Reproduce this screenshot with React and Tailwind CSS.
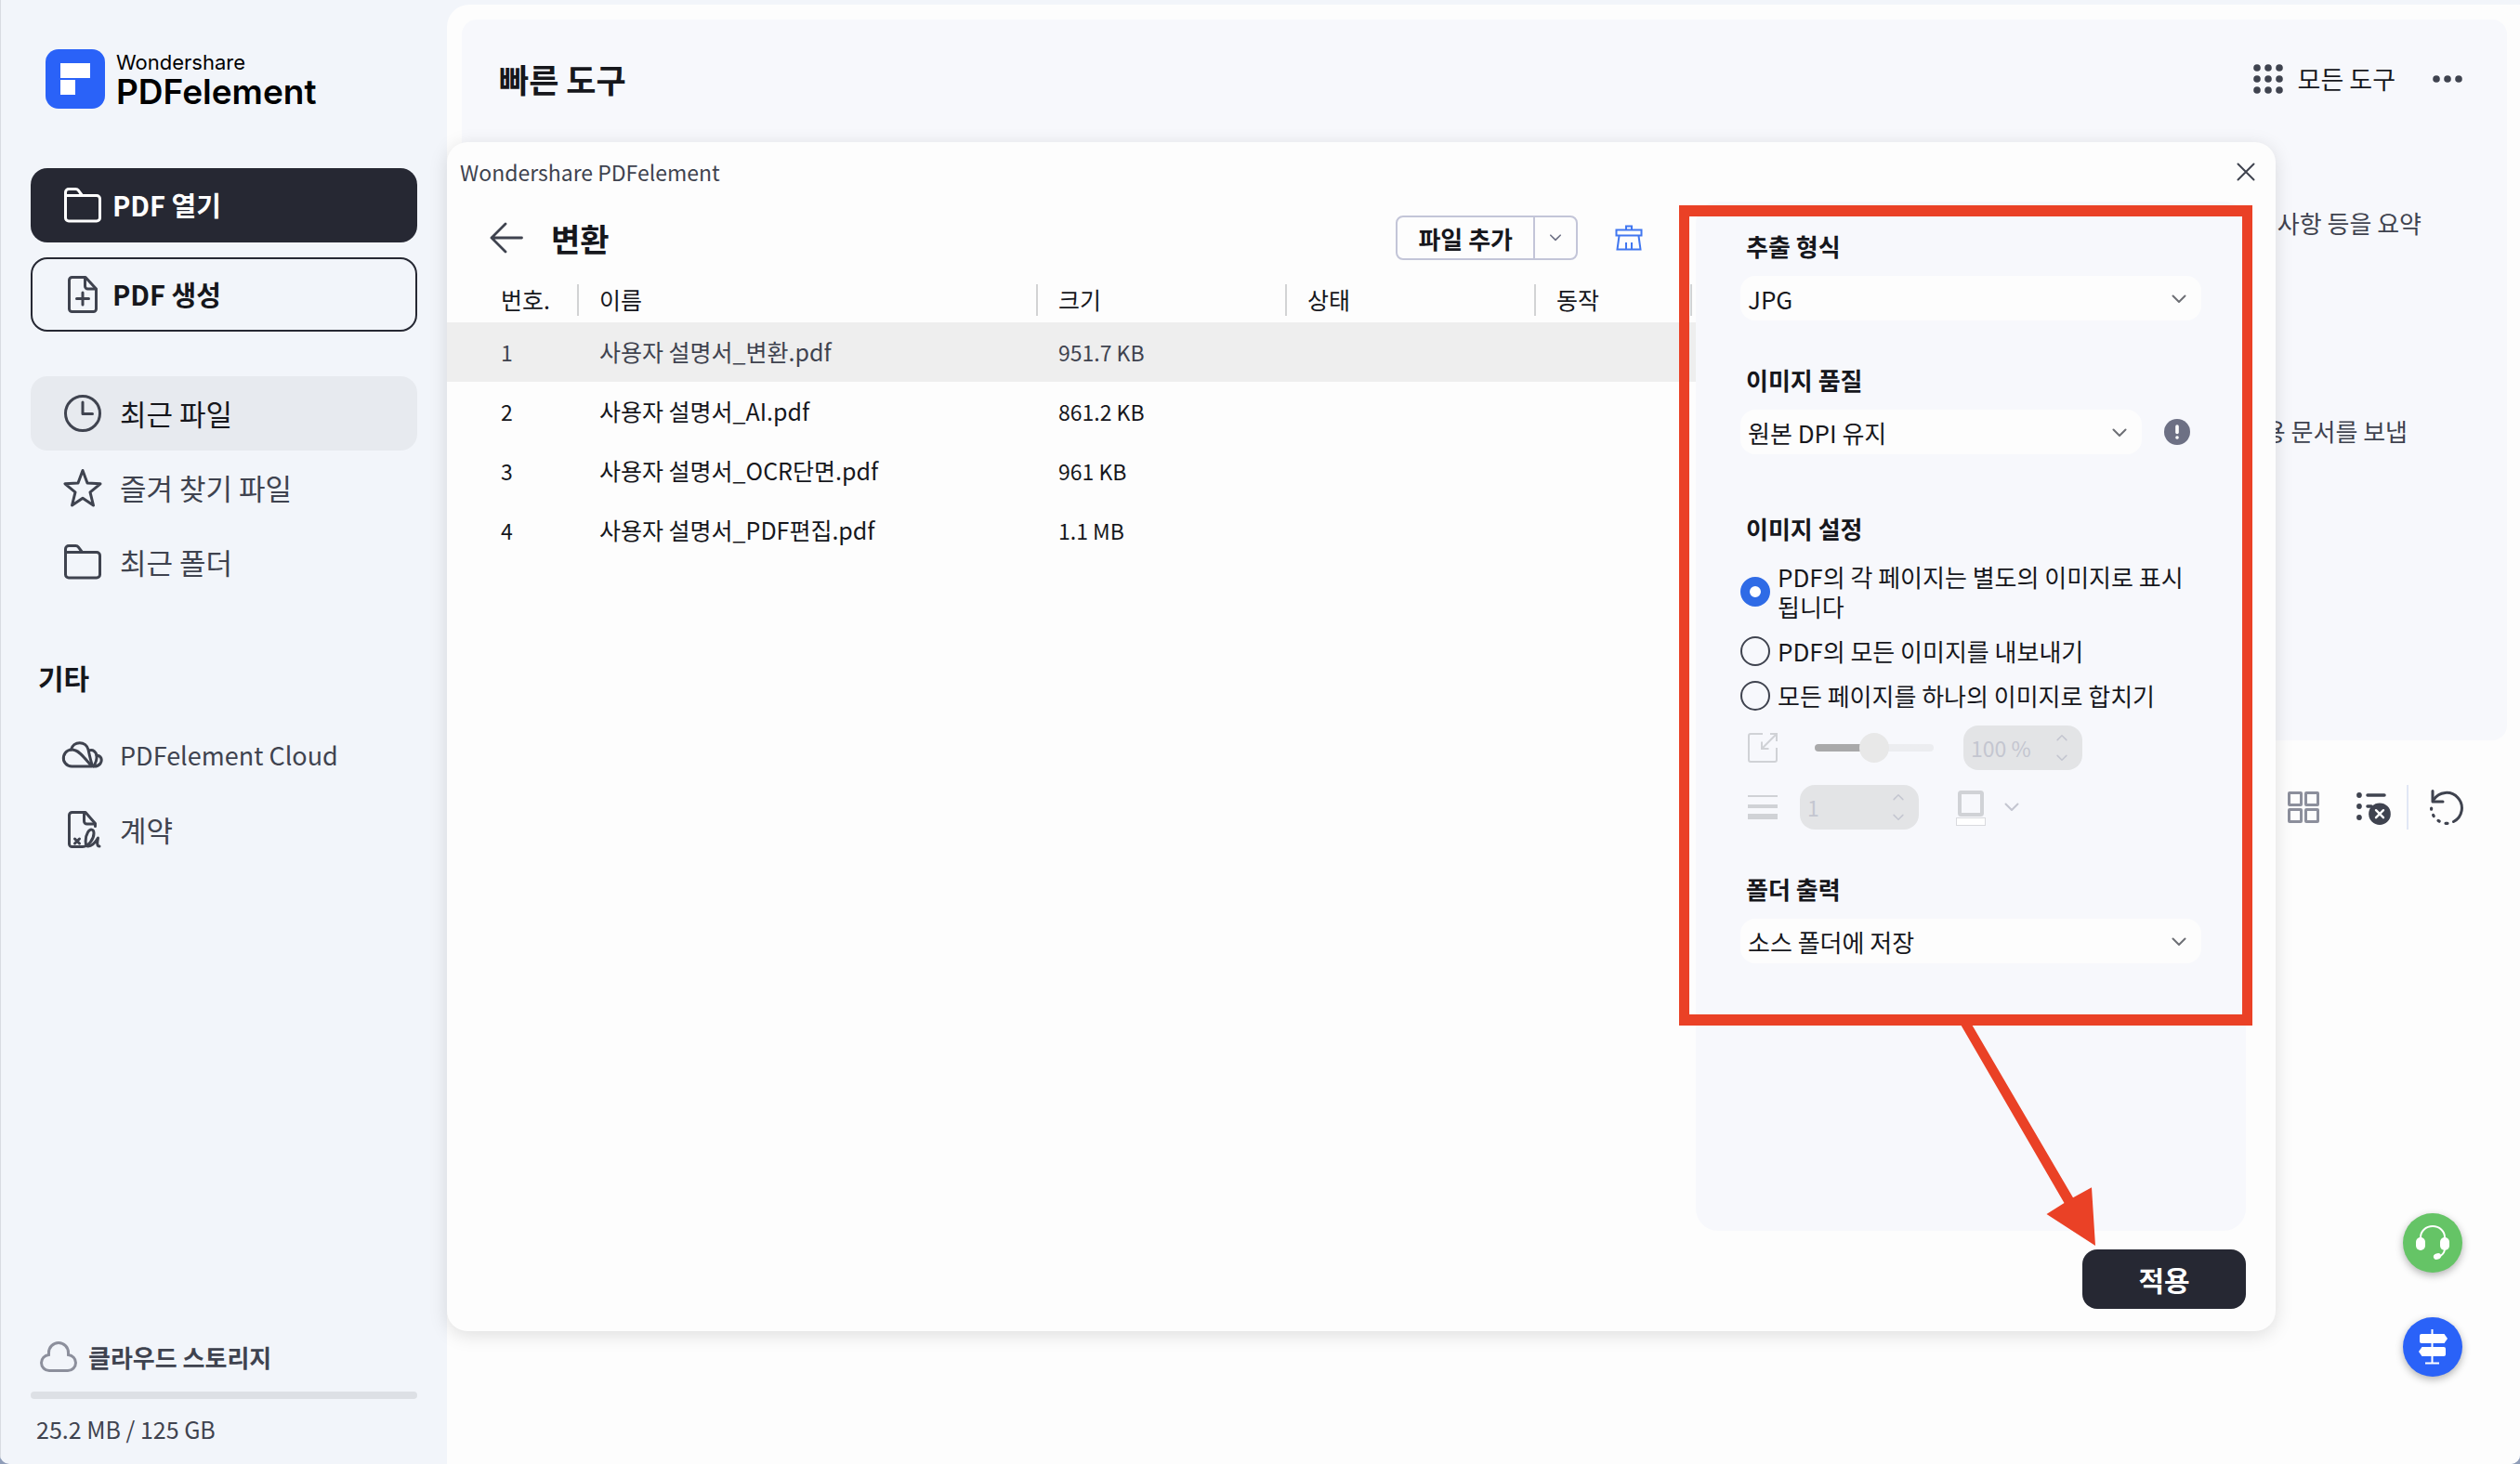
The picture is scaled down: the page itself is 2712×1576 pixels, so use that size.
import { useState } from 'react';

const files = [
  { id: 1, name: '사용자 설명서_변환.pdf', size: '951.7 KB' },
  { id: 2, name: '사용자 설명서_AI.pdf', size: '861.2 KB' },
  { id: 3, name: '사용자 설명서_OCR단면.pdf', size: '961 KB' },
  { id: 4, name: '사용자 설명서_PDF편집.pdf', size: '1.1 MB' },
];

const imageModes = [
  { id: 'separate', label: 'PDF의 각 페이지는 별도의 이미지로 표시됩니다' },
  { id: 'export', label: 'PDF의 모든 이미지를 내보내기' },
  { id: 'merge', label: '모든 페이지를 하나의 이미지로 합치기' },
];

// All sidebar icons share a 48px box
function Icon({ children, className = 'size-12' }) {
  return (
    <svg
      viewBox="0 0 48 48"
      className={`shrink-0 ${className}`}
      fill="none"
      stroke="currentColor"
      strokeWidth="3"
      strokeLinecap="round"
      strokeLinejoin="round"
      aria-hidden="true"
    >
      {children}
    </svg>
  );
}

function FolderIcon() {
  return (
    <Icon>
      <path d="M5.5 13.5V10A3.5 3.5 0 0 1 9 6.500h7.500a3.500 3.500 0 0 1 2.800 1.400L23.500 13.500" />
      <path d="M5.500 13.500H39a3.500 3.500 0 0 1 3.500 3.500v20.500a3.500 3.500 0 0 1-3.500 3.500H9a3.500 3.500 0 0 1-3.500-3.500z" />
    </Icon>
  );
}

function NewFileIcon() {
  return (
    <Icon>
      <path d="M27 5.500H12.500a3 3 0 0 0-3 3v31a3 3 0 0 0 3 3h23a3 3 0 0 0 3-3V18z" />
      <path d="M26.500 6v9a3 3 0 0 0 3 3H38" />
      <path d="M24 22v13M17.500 28.500h13" />
    </Icon>
  );
}

function ClockIcon() {
  return (
    <Icon>
      <circle cx="24" cy="24" r="18.500" />
      <path d="M24 12v12.500h10.500" />
    </Icon>
  );
}

function StarIcon() {
  return (
    <Icon>
      <path d="M24 5.500l5 13.500 14 .8-11 9L35.500 43 24 35.200 12.500 43l3.500-14.200-11-9 14-.8z" />
    </Icon>
  );
}

function CloudsIcon() {
  return (
    <Icon>
      <path d="M34 36H12.500a9 9 0 1 1 3.500-17.200c5 1.500 9 7 18 17.200z" />
      <path d="M11.500 18a9.500 9.500 0 0 1 18.500 0c1.500 7 3 13 4.500 17.500" />
      <path d="M30.500 19c5-1.500 8 1.500 8.500 5.500.5 4-1 8-3.500 11.500" />
      <path d="M39 24c5 .5 6.500 5 4 9-1.500 2-3.500 3-7 3" />
    </Icon>
  );
}

function ContractIcon() {
  return (
    <Icon>
      <path d="M37.500 20.500V17.500L27 5.500H12.500a3 3 0 0 0-3 3v31a3 3 0 0 0 3 3H24c6 0 12-8 12-14.500 0-5-4-5-6.500-1-3 5-3.500 15 .5 15 4.500 0 7.500-4 10.500-9-1 5-1.500 9 1.500 9" />
      <path d="M25.500 6v9a3 3 0 0 0 3 3H37" />
      <path d="M15.500 34l5 5m0-5l-5 5" />
    </Icon>
  );
}

function Chevron({ className = '' }) {
  return (
    <svg viewBox="0 0 16 10" className={className} fill="none" stroke="currentColor" strokeWidth="2" strokeLinecap="round" strokeLinejoin="round" aria-hidden="true">
      <path d="M1.500 1.500L8 8l6.500-6.500" />
    </svg>
  );
}

function NavItem({ icon, label, active, labelClass = 'text-[31px]' }) {
  return (
    <a
      href="#"
      className={`flex h-20 items-center gap-4 rounded-[18px] px-8 ${
        active ? 'bg-[#e7eaef] text-[#16171c]' : 'text-[#3f434f]'
      }`}
    >
      <span className="flex text-[#3f434f]">{icon}</span>
      <span className={labelClass}>{label}</span>
    </a>
  );
}

function Sidebar() {
  return (
    <aside className="flex w-[481px] shrink-0 flex-col border-l border-[#d9dce2] pt-[53px] pr-8 pb-5 pl-8">
      <div className="flex h-16 items-center gap-3 pl-4">
        <svg viewBox="0 0 64 64" className="size-16 shrink-0" aria-hidden="true">
          <rect width="64" height="64" rx="14" fill="#2a62f8" />
          <path d="M16 15h32v16H16zM16 33h16v16H16z" fill="#fff" />
        </svg>
        <div className="font-['Inter',sans-serif] text-black">
          <div className="text-[22px] leading-7">Wondershare</div>
          <div className="text-[37px] leading-9 font-semibold">PDFelement</div>
        </div>
      </div>

      <button className="mt-16 flex h-20 items-center gap-2 rounded-[18px] bg-[#262833] px-8 text-[29px] font-bold text-white">
        <FolderIcon />
        PDF 열기
      </button>
      <button className="mt-4 flex h-20 items-center gap-2 rounded-[18px] border-2 border-[#262833] px-[30px] text-[29px] font-bold">
        <span className="flex text-[#3f434f]"><NewFileIcon /></span>
        PDF 생성
      </button>

      <nav className="mt-12">
        <NavItem icon={<ClockIcon />} label="최근 파일" active />
        <NavItem icon={<StarIcon />} label="즐겨 찾기 파일" />
        <NavItem icon={<FolderIcon />} label="최근 폴더" />
        <h2 className="mt-16 mb-6 pl-2 text-[30px] leading-10 font-bold">기타</h2>
        <NavItem icon={<CloudsIcon />} label="PDFelement Cloud" labelClass="text-[27px]" />
        <NavItem icon={<ContractIcon />} label="계약" />
      </nav>

      <div className="mt-auto">
        <div className="flex h-9 items-center gap-3 pl-2.5 text-[26px] font-bold text-[#3f434f]">
          <svg viewBox="0 0 40 34" className="h-[34px] w-10 shrink-0" fill="none" stroke="#8c8f9c" strokeWidth="3" aria-hidden="true">
            <path d="M9.500 15.500V13a10.500 10.500 0 0 1 21 0v2.500c4.500.5 8 4 8 8.500 0 5-4 8.500-8.500 8.500H10c-4.500 0-8.500-3.500-8.500-8.500 0-4.500 3.500-8 8-8.500z" />
          </svg>
          클라우드 스토리지
        </div>
        <div className="mt-5 h-2 rounded-full bg-[#dde0e5]" />
        <p className="mt-3.5 pl-1.5 text-[25px] leading-9 text-[#3f434f]">25.2 MB / 125 GB</p>
      </div>
    </aside>
  );
}

function QuickTools() {
  return (
    <section className="ml-4 mr-3.5 flex h-[776px] flex-col rounded-2xl bg-[#f7f8fc]">
      <div className="flex items-center justify-between pt-[38px] pr-12 pl-10">
        <h1 className="text-[35px] leading-[52px] font-bold">빠른 도구</h1>
        <div className="flex items-center gap-10">
          <button className="flex items-center gap-4 text-[27px]">
            <svg viewBox="0 0 32 32" className="size-8" fill="#3f434f" aria-hidden="true">
              {[4, 16, 28].map((y) =>
                [4, 16, 28].map((x) => <circle key={`${x}-${y}`} cx={x} cy={y} r="3.800" />)
              )}
            </svg>
            모든 도구
          </button>
          <button aria-label="더 보기">
            <svg viewBox="0 0 32 8" className="h-2 w-8" fill="#3f434f">
              <circle cx="4" cy="4" r="3.800" />
              <circle cx="16" cy="4" r="3.800" />
              <circle cx="28" cy="4" r="3.800" />
            </svg>
          </button>
        </div>
      </div>
      <p className="mt-[109px] pr-[92px] text-right text-[26px] leading-10 text-[#3f434f]">사항 등을 요약</p>
      <p className="mt-[184px] pr-[107px] text-right text-[26px] leading-10 text-[#3f434f]">용 문서를 보냅</p>
    </section>
  );
}

function ListToolbar() {
  return (
    <div className="mt-12 flex h-12 items-center justify-end pr-[60px]">
      <button aria-label="바둑판 보기">
        <svg viewBox="0 0 34 34" className="size-[34px]" fill="none" stroke="#8c8f9c" strokeWidth="3" aria-hidden="true">
          <rect x="1.500" y="1.500" width="13" height="13" rx=".5" />
          <rect x="19.500" y="1.500" width="13" height="13" rx=".5" />
          <rect x="1.500" y="19.500" width="13" height="13" rx=".5" />
          <rect x="19.500" y="19.500" width="13" height="13" rx=".5" />
        </svg>
      </button>
      <button className="ml-10" aria-label="목록 지우기">
        <svg viewBox="0 0 38 38" className="size-[38px]" fill="none" stroke="#3f434f" strokeWidth="3.500" strokeLinecap="round" aria-hidden="true">
          <path d="M12 6h18M12 18h4" />
          <g fill="#3f434f" stroke="none">
            <circle cx="3" cy="6" r="2.900" />
            <circle cx="3" cy="18" r="2.900" />
            <circle cx="3" cy="30" r="2.900" />
            <circle cx="25" cy="26.200" r="11.800" />
          </g>
          <path d="M21 22.200l8 8m0-8l-8 8" stroke="#fff" strokeWidth="2.400" />
        </svg>
      </button>
      <span className="mx-4 h-12 w-0.5 bg-[#e1e7f5]" />
      <button className="ml-1.5" aria-label="새로 고침">
        <svg viewBox="0 0 38 38" className="size-[38px]" fill="none" stroke="#3f434f" strokeWidth="3" strokeLinecap="round" strokeLinejoin="round" aria-hidden="true">
          <path d="M5 11A16.500 16.500 0 1 1 26.500 34.500" />
          <path d="M4 1.500v11.500h11" />
          <path d="M2.600 20v1.200M4.600 27.500l.6 1.100M10 33.400l1.200.8M18 36.300h2" strokeWidth="3.200" />
        </svg>
      </button>
    </div>
  );
}

function SelectBox({ id, value, className = '' }) {
  return (
    <div className={`relative h-12 ${className}`}>
      <select id={id} defaultValue={value} className="size-full appearance-none rounded-2xl bg-[#fdfdfd] pr-12 pl-2 text-[26px]">
        <option>{value}</option>
      </select>
      <Chevron className="pointer-events-none absolute top-5 right-4 h-2.5 w-4 text-[#6d6f75]" />
    </div>
  );
}

function Spinner({ label, value }) {
  return (
    <div className="flex h-12 w-32 items-center rounded-2xl bg-[#e3e4e6] pr-4 text-[#c4c6d0]">
      <input aria-label={label} disabled defaultValue={value} className="w-0 flex-1 pl-2 text-[23px]" />
      <div className="flex flex-col gap-3.5">
        <button disabled aria-label={`${label} 늘리기`}><Chevron className="h-2 w-3 rotate-180" /></button>
        <button disabled aria-label={`${label} 줄이기`}><Chevron className="h-2 w-3" /></button>
      </div>
    </div>
  );
}

function FileTable() {
  return (
    <table className="mt-1 w-full table-fixed text-left text-[25px]">
      <colgroup>
        <col className="w-[142px]" />
        <col />
        <col className="w-[268px]" />
        <col className="w-[268px]" />
        <col className="w-[172px]" />
      </colgroup>
      <thead>
        <tr className="h-12">
          {['번호.', '이름', '크기', '상태', '동작'].map((title) => (
            <th key={title} className="p-0 font-normal first:pl-9 last:pr-1">
              <div className="flex h-[34px] items-center border-r-2 border-[#d2d3d4] pl-[22px]">{title}</div>
            </th>
          ))}
        </tr>
      </thead>
      <tbody>
        {files.map((file) => (
          <tr key={file.id} className="h-16 first:bg-[#eeeeee] first:text-[#3f434f]">
            <td className="pl-[58px] text-[23px]">{file.id}</td>
            <td className="pl-[22px]">{file.name}</td>
            <td className="pl-[22px] text-[23px]">{file.size}</td>
            <td />
            <td />
          </tr>
        ))}
      </tbody>
    </table>
  );
}

function SettingsPanel() {
  const [mode, setMode] = useState('separate');

  return (
    <div className="relative flex-1 rounded-3xl bg-[#f7f8fc] px-12 pt-7">
      <label htmlFor="format" className="mb-3 block pl-1.5 text-[26px] leading-10 font-bold">추출 형식</label>
      <SelectBox id="format" value="JPG" />

      <label htmlFor="quality" className="mt-11 mb-3 block pl-1.5 text-[26px] leading-10 font-bold">이미지 품질</label>
      <div className="flex items-center">
        <SelectBox id="quality" value="원본 DPI 유지" className="flex-1" />
        <svg viewBox="0 0 28 28" className="mx-3 ml-6 size-7" aria-hidden="true">
          <circle cx="14" cy="14" r="14" fill="#6d7084" />
          <path d="M14 8v6.500" stroke="#fff" strokeWidth="3.600" strokeLinecap="round" />
          <circle cx="14" cy="20" r="1.800" fill="#fff" />
        </svg>
      </div>

      <fieldset className="mt-[60px]">
        <legend className="pl-1.5 text-[26px] leading-10 font-bold">이미지 설정</legend>
        <div className="mt-4 flex flex-col gap-4">
          {imageModes.map((m) => (
            <label key={m.id} className="flex items-center gap-2 text-[26px] leading-8">
              <input
                type="radio"
                name="image-mode"
                checked={mode === m.id}
                onChange={() => setMode(m.id)}
                className="size-8 shrink-0 appearance-none rounded-full border-2 border-[#3f434f] checked:border-[10px] checked:border-[#2f6be6] checked:bg-white"
              />
              {m.label}
            </label>
          ))}
        </div>
      </fieldset>

      <div className="mt-4 flex items-center pl-2">
        <svg viewBox="0 0 32 32" className="size-8" fill="none" stroke="#d0d2d6" strokeWidth="2" aria-hidden="true">
          <path d="M16 1H3a2 2 0 0 0-2 2v26a2 2 0 0 0 2 2h26a2 2 0 0 0 2-2V16" />
          <path d="M15 17L30.500 1.500M24 1h7v8M15 9.500V17h7.500" />
        </svg>
        <input
          type="range"
          aria-label="크기 비율"
          disabled
          defaultValue="50"
          className="ml-10 h-2 w-32 appearance-none rounded-full bg-linear-to-r from-[#a9a9aa] from-50% to-[#ecedf0] to-50% [&::-webkit-slider-thumb]:size-8 [&::-webkit-slider-thumb]:appearance-none [&::-webkit-slider-thumb]:rounded-full [&::-webkit-slider-thumb]:bg-[#e8e8e8]"
        />
        <div className="ml-8"><Spinner label="비율" value="100 %" /></div>
      </div>

      <div className="mt-4 flex items-center pl-2">
        <svg viewBox="0 0 32 26" className="h-[26px] w-8" fill="#d0d2d6" aria-hidden="true">
          <path d="M0 0h32v2H0zM0 10h32v4H0zM0 20h32v6H0z" />
        </svg>
        <div className="ml-6"><Spinner label="간격" value="1" /></div>
        <button disabled aria-label="테두리 색" className="ml-10 flex items-center gap-5 text-[#c4c6d0]">
          <svg viewBox="0 0 32 40" className="h-10 w-8" aria-hidden="true">
            <rect x="4" y="4" width="24" height="24" rx="1.500" fill="#f7f8fc" stroke="#d0d2d6" strokeWidth="4" />
            <rect x=".5" y="31.500" width="31" height="8" fill="#fff" stroke="#d9dade" />
          </svg>
          <Chevron className="h-2.5 w-4" />
        </button>
      </div>

      <label htmlFor="output" className="mt-11 mb-3 block pl-1.5 text-[26px] leading-10 font-bold">폴더 출력</label>
      <SelectBox id="output" value="소스 폴더에 저장" />

      <div className="pointer-events-none absolute top-1 -right-[7px] bottom-[221px] -left-[18px] border-x-[11px] border-y-12 border-[#ea4126]" />
    </div>
  );
}

function ConvertDialog() {
  return (
    <div role="dialog" aria-label="Wondershare PDFelement" className="absolute top-[148px] right-[263px] bottom-[143px] left-0 flex flex-col rounded-[22px] bg-[#fdfdfd] shadow-[0_4px_20px_rgba(0,0,0,0.13)]">
      <div className="flex h-16 shrink-0 items-center justify-between pr-[21px] pl-3.5 text-[23px] text-[#3f434f]">
        Wondershare PDFelement
        <button aria-label="닫기">
          <svg viewBox="0 0 22 22" className="size-[22px]" fill="none" stroke="#3f434f" strokeWidth="2" strokeLinecap="round">
            <path d="M2.500 2.500l17 17M19.500 2.500l-17 17" />
          </svg>
        </button>
      </div>

      <div className="flex flex-1">
        <div className="min-w-0 flex-1">
          <div className="flex h-[78px] items-center pr-[57px] pl-[46px]">
            <button aria-label="뒤로">
              <svg viewBox="0 0 36 34" className="h-[34px] w-9" fill="none" stroke="#3f434f" strokeWidth="2.800" strokeLinecap="round" strokeLinejoin="round">
                <path d="M34.500 17H2M17 2L2 17l15 15" />
              </svg>
            </button>
            <h2 className="ml-[30px] text-[34px] font-bold">변환</h2>
            <div className="ml-auto flex h-12 rounded-lg border-2 border-[#c3c5d8]">
              <button className="px-[22px] text-[26px] font-bold">파일 추가</button>
              <button aria-label="추가 옵션" className="flex w-[46px] items-center justify-center border-l-2 border-[#c3c5d8] text-[#6d7084]">
                <Chevron className="h-2 w-3.5" />
              </button>
            </div>
            <button aria-label="목록 비우기" className="ml-10">
              <svg viewBox="0 0 30 28" className="h-7 w-[30px]" fill="none" stroke="#4177f0" strokeWidth="2" aria-hidden="true">
                <path d="M12 5V1.500h6V5M1.500 5.500h27v6h-27zM4.500 12L2.500 26.500h25L25.500 12M12 26v-7M18 26v-7" />
              </svg>
            </button>
          </div>
          <FileTable />
        </div>

        <div className="relative mr-8 flex w-[592px] flex-col pb-6">
          <SettingsPanel />
          <button className="mt-5 h-16 w-44 self-end rounded-2xl bg-[#262833] text-[30px] font-bold text-white">적용</button>
          <svg viewBox="2102 1102 154 240" className="pointer-events-none absolute right-[161px] bottom-[91px] h-60 w-[154px]" fill="#ea4126" aria-hidden="true">
            <path d="M2109.500 1102h12L2231 1289.300l20-11 4 62.700-52.500-34 19-12z" />
          </svg>
        </div>
      </div>
    </div>
  );
}

function FloatingButtons() {
  return (
    <div className="absolute right-[62px] bottom-[94px] flex flex-col gap-12">
      <button aria-label="고객 지원" className="size-16 rounded-full bg-[#65c466] shadow-[0_3px_8px_rgba(0,0,0,0.3)]">
        <svg viewBox="0 0 64 64" fill="#fff" stroke="none">
          <path d="M19 28v-2a13 12 0 0 1 26 0v2" fill="none" stroke="#fff" strokeWidth="2" />
          <rect x="14" y="26" width="10" height="14" rx="5" />
          <rect x="40" y="26" width="10" height="14" rx="5" />
          <path d="M45 39c-.5 4-3 6.500-6.500 7.500" fill="none" stroke="#fff" strokeWidth="2" />
          <ellipse cx="37" cy="46.500" rx="4.200" ry="3.200" transform="rotate(-20 37 46.500)" />
        </svg>
      </button>
      <button aria-label="길잡이" className="size-16 rounded-full bg-[#2a62f8] shadow-[0_3px_8px_rgba(0,0,0,0.3)]">
        <svg viewBox="0 0 64 64" fill="#fff">
          <path d="M30.500 13h2v36h-2zM24 48.500h15v2H24z" />
          <path d="M20 18h24.500l3.500 5-3.500 5H20a2 2 0 0 1-2-2v-6a2 2 0 0 1 2-2z" />
          <path d="M20.500 32H44a2 2 0 0 1 2 2v6a2 2 0 0 1-2 2H20.500L17 37z" />
        </svg>
      </button>
    </div>
  );
}

function App() {
  return (
    <div className="bg-[#8f9db8] font-['Noto_Sans_CJK_KR',sans-serif] text-[#16171c]">
      <div className="flex min-h-screen overflow-hidden rounded-b-[10px] bg-[#f2f5fa]">
        <Sidebar />
        <main className="relative mt-[5px] min-w-0 flex-1 rounded-tl-3xl bg-[#fdfdfd] pt-4">
          <QuickTools />
          <ListToolbar />
          <ConvertDialog />
          <FloatingButtons />
        </main>
      </div>
    </div>
  );
}

export default App;
